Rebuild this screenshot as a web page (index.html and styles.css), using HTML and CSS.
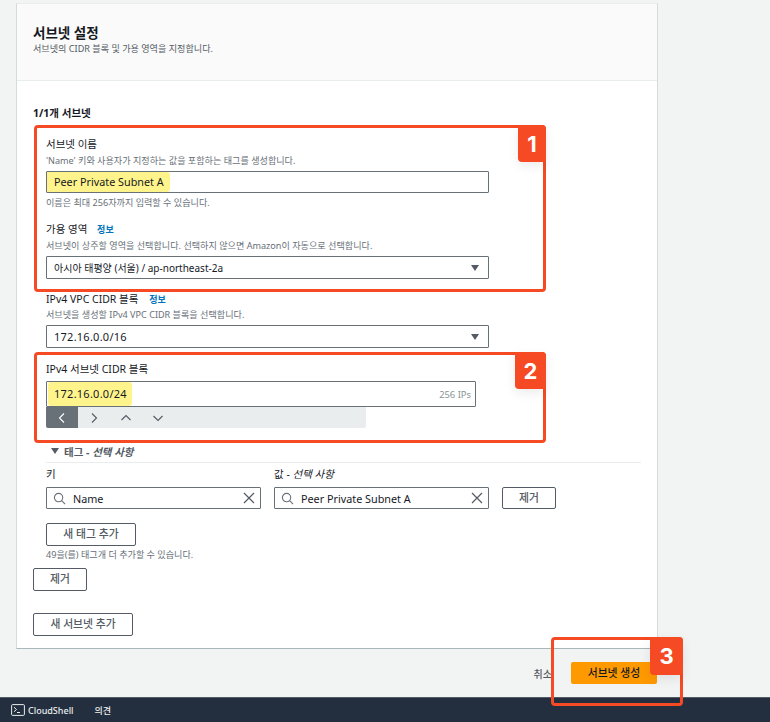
FILE: index.html
```html
<!DOCTYPE html>
<html lang="ko">
<head>
<meta charset="utf-8">
<title>서브넷 설정</title>
<link rel="stylesheet" href="styles.css">
</head>
<body>
<main class="page">
  <section class="card">
    <header class="card-head">
      <h2 class="card-title">서브넷 설정</h2>
      <p class="card-sub">서브넷의 CIDR 블록 및 가용 영역을 지정합니다.</p>
    </header>
    <div class="card-body">
      <h3 class="count">1/1개 서브넷</h3>
      <div class="subnet">
        <label class="label first">서브넷 이름</label>
        <p class="desc">'Name' 키와 사용자가 지정하는 값을 포함하는 태그를 생성합니다.</p>
        <div class="input name-input"><span class="mark mark-name">Peer Private Subnet A</span></div>
        <p class="desc help">이름은 최대 256자까지 입력할 수 있습니다.</p>

        <label class="label az">가용 영역 <a class="info">정보</a></label>
        <p class="desc">서브넷이 상주할 영역을 선택합니다. 선택하지 않으면 Amazon이 자동으로 선택합니다.</p>
        <div class="input select"><span>아시아 태평양 (서울) / ap-northeast-2a</span>
          <svg class="caret" viewBox="0 0 10 8"><path d="M1 1h8L5 7z"/></svg>
        </div>

        <label class="label vpc">IPv4 VPC CIDR 블록 <a class="info">정보</a></label>
        <p class="desc tight">서브넷을 생성할 IPv4 VPC CIDR 블록을 선택합니다.</p>
        <div class="input select"><span class="num">172.16.0.0/16</span>
          <svg class="caret" viewBox="0 0 10 8"><path d="M1 1h8L5 7z"/></svg>
        </div>

        <label class="label cidr">IPv4 서브넷 CIDR 블록</label>
        <div class="input cidr-input"><span class="mark mark-cidr num">172.16.0.0/24</span><span class="ips">256 IPs</span></div>
        <div class="stepper">
          <span class="step active"><svg viewBox="0 0 12 12"><path d="M8 1.5 3.5 6 8 10.500"/></svg></span>
          <span class="step"><svg viewBox="0 0 12 12"><path d="M4 1.500 8.500 6 4 10.500"/></svg></span>
          <span class="step"><svg viewBox="0 0 12 12"><path d="M1.500 8 6 3.500 10.500 8"/></svg></span>
          <span class="step"><svg viewBox="0 0 12 12"><path d="M1.500 4 6 8.500 10.500 4"/></svg></span>
        </div>

        <div class="tags-head"><svg class="tags-caret" viewBox="0 0 10 8"><path d="M1 1h8L5 7z"/></svg><b>태그 - <i>선택 사항</i></b></div>
        <div class="tags">
          <div class="tag-labels">
            <span class="tag-col">키</span>
            <span class="tag-col">값 - <i>선택 사항</i></span>
          </div>
          <div class="tag-row">
            <div class="input token">
              <svg class="search" viewBox="0 0 14 14"><circle cx="6" cy="6" r="4.500"/><path d="m9.300 9.300 3.700 3.700"/></svg>
              <span class="token-text">Name</span>
              <svg class="clear" viewBox="0 0 12 12"><path d="m1 1 10 10M11 1 1 11"/></svg>
            </div>
            <div class="input token">
              <svg class="search" viewBox="0 0 14 14"><circle cx="6" cy="6" r="4.500"/><path d="m9.300 9.300 3.700 3.700"/></svg>
              <span class="token-text">Peer Private Subnet A</span>
              <svg class="clear" viewBox="0 0 12 12"><path d="m1 1 10 10M11 1 1 11"/></svg>
            </div>
            <button class="btn btn-remove">제거</button>
          </div>
          <button class="btn btn-add-tag">새 태그 추가</button>
          <p class="desc tag-note">49을(를) 태그개 더 추가할 수 있습니다.</p>
        </div>
      </div>
      <button class="btn btn-remove outer-remove">제거</button>
      <button class="btn btn-add-subnet">새 서브넷 추가</button>
    </div>
  </section>

  <div class="actions">
    <a class="cancel">취소</a>
    <button class="primary">서브넷 생성</button>
  </div>

  <footer class="shell">
    <svg class="shell-icon" viewBox="0 0 14 12"><rect x="0.600" y="0.600" width="12.800" height="10.800" rx="1"/><path d="m3 3.200 2.500 2.300L3 7.800M6 8.500h3"/></svg>
    <span class="shell-name">CloudShell</span>
    <span class="shell-fb">의견</span>
  </footer>

  <div class="note note-1"><span class="badge badge-1">1</span></div>
  <div class="note note-2"><span class="badge badge-2">2</span></div>
  <div class="note note-3"><span class="badge badge-3">3</span></div>
</main>
</body>
</html>
```
FILE: styles.css
```css
* { box-sizing: border-box; }
html, body { margin: 0; padding: 0; }
body {
  background: #f2f3f3;
  color: #16191f;
  font-family: "Noto Sans", "Noto Sans CJK KR", sans-serif;
  font-size: 10px;
}
.page { position: relative; width: 770px; height: 722px; overflow: hidden; padding-top: 3px; }

.card {
  width: 642px;
  margin-left: 16px;
  background: #fff;
  border: 1px solid #d5dbdb;
  border-bottom-color: #aab7b8;
  border-top-color: #eaeded;
}
.card-head {
  height: 77px;
  padding: 21px 16px 0;
  background: #fafafa;
  border-bottom: 1px solid #eaeded;
}
.card-title { margin: 0; height: 17px; font-size: 13.500px; line-height: 17px; font-weight: 700; }
.card-sub { margin: 1px 0 0; height: 12px; font-size: 9.100px; line-height: 12px; color: #545b64; }
.card-body { padding: 25px 16px 12px; }
.count { margin: 0; height: 14px; font-size: 10.500px; line-height: 14px; font-weight: 700; }
.subnet { padding-left: 13px; }

.label { display: block; height: 14px; font-size: 10.500px; line-height: 14px; color: #16191f; }
.label.first { margin-top: 17px; }
.label.az { margin-top: 13px; }
.label.vpc { margin-top: 13px; }
.label.cidr { margin-top: 14px; }
.info { margin-left: 7px; font-size: 9px; line-height: 1; font-weight: 700; color: #0073bb; }
.vpc .info { margin-left: 8px; }

.desc { height: 13px; margin: 3px 0 0; font-size: 9.100px; line-height: 13px; color: #687078; white-space: nowrap; }
.desc.tight { margin-top: 2px; }
.desc.help { margin-top: 3px; }

.input {
  display: flex;
  align-items: center;
  position: relative;
  width: 443px;
  height: 23px;
  margin-top: 4px;
  padding: 0 7px;
  background: #fff;
  border: 1px solid #687078;
  border-radius: 1px;
  font-size: 10px;
}
.name-input { height: 22px; font-size: 10.800px; }
.select { justify-content: space-between; }
.caret { width: 10px; height: 8px; margin-right: 1px; }
.caret path { fill: #545b64; }
.num { font-size: 11px; letter-spacing: .25px; }

.mark { position: relative; background: #fff48c; white-space: nowrap; }
.mark-name { margin-left: -7px; padding: 3px 6px 3px 7px; line-height: 14px; border-radius: 0 3px 3px 0; }
.mark-cidr { margin-left: -6px; padding: 5px 5px 5px 6px; line-height: 14px; border-radius: 3px; }

.cidr-input { width: 430px; height: 26px; margin-top: 5px; justify-content: space-between; }
.ips { margin-right: -3px; font-size: 9.400px; color: #879596; }

.stepper { display: flex; width: 320px; height: 21px; background: #eaeded; border-radius: 0 0 2px 2px; }
.step { display: flex; align-items: center; justify-content: center; width: 32px; }
.step.active { background: #687078; border-radius: 0 0 0 2px; }
.step svg { width: 12px; height: 12px; fill: none; stroke: #545b64; stroke-width: 1.100; }
.step.active svg { stroke: #fff; }

.tags-head { display: flex; align-items: center; height: 14px; margin-top: 16px; padding-left: 4px; font-size: 10.500px; color: #545b64; }
.tags-head b { font-weight: 700; }
.tags-caret { width: 10px; height: 8px; margin-right: 4px; }
.tags-caret path { fill: #545b64; }
.tags { margin-top: 4px; padding-top: 4px; border-top: 1px solid #eaeded; }
.tag-labels { display: flex; gap: 13px; height: 14px; line-height: 14px; font-size: 10.500px; }
.tag-col { width: 215px; }
.tag-row { display: flex; align-items: center; gap: 13px; margin-top: 6px; }
.token { width: 215px; height: 22px; margin-top: 0; padding: 0 6px; font-size: 10.800px; }
.search { width: 13px; height: 13px; fill: none; stroke: #687078; stroke-width: 1.200; flex: none; }
.token-text { flex: 1; margin-left: 7px; white-space: nowrap; }
.clear { width: 12px; height: 12px; fill: none; stroke: #545b64; stroke-width: 1.200; flex: none; margin-right: -1px; }

.btn {
  display: block;
  height: 23px;
  padding: 0;
  background: #fff;
  border: 1px solid #545b64;
  border-radius: 2px;
  font: 500 10.800px/1 "Noto Sans", "Noto Sans CJK KR", sans-serif;
  color: #545b64;
}
.btn-remove { width: 54px; height: 23px; }
.tag-row .btn-remove { height: 22px; }
.btn-add-tag { width: 90px; margin-top: 14px; }
.tag-note { margin-top: 2px; }
.outer-remove { margin-top: 7px; }
.btn-add-subnet { width: 100px; margin-top: 22px; }

.actions { display: flex; align-items: center; justify-content: flex-end; gap: 19px; width: 657px; height: 22px; margin-top: 13px; }
.cancel { font-size: 10px; font-weight: 500; color: #545b64; }
.primary {
  width: 86px;
  height: 22px;
  padding: 0;
  background: #ff9900;
  border: 0;
  border-radius: 2px;
  font: 500 10.800px/1 "Noto Sans", "Noto Sans CJK KR", sans-serif;
  color: #16191f;
}

.shell {
  display: flex;
  align-items: center;
  height: 25px;
  margin-top: 13px;
  padding-left: 11px;
  background: #232f3e;
  border-top: 1px solid #545b64;
  color: #eaeded;
  font-size: 9px;
  font-weight: 500;
}
.shell-icon { width: 14px; height: 12px; fill: none; stroke: #eaeded; stroke-width: 1; }
.shell-name { margin-left: 3px; }
.shell-fb { margin-left: 21px; }

.note { position: absolute; border: 3px solid #f54a24; border-radius: 4px; }
.note-1 { left: 34px; top: 125px; width: 512px; height: 167px; }
.note-2 { left: 34px; top: 352px; width: 512px; height: 91px; }
.note-3 { left: 551px; top: 637px; width: 132px; height: 69px; }
.badge {
  position: absolute;
  top: -3px;
  right: -3px;
  display: flex;
  align-items: center;
  justify-content: center;
  height: 37px;
  background: #f54a24;
  border-radius: 0 4px 0 4px;
  box-shadow: 0 4px 12px rgba(0, 0, 0, .08);
  color: #fff;
  font: 700 22px/1 "Inter", sans-serif;
}
.badge-1 { width: 28px; }
.badge-2 { width: 31px; }
.badge-3 { width: 33px; height: 38px; }
```
